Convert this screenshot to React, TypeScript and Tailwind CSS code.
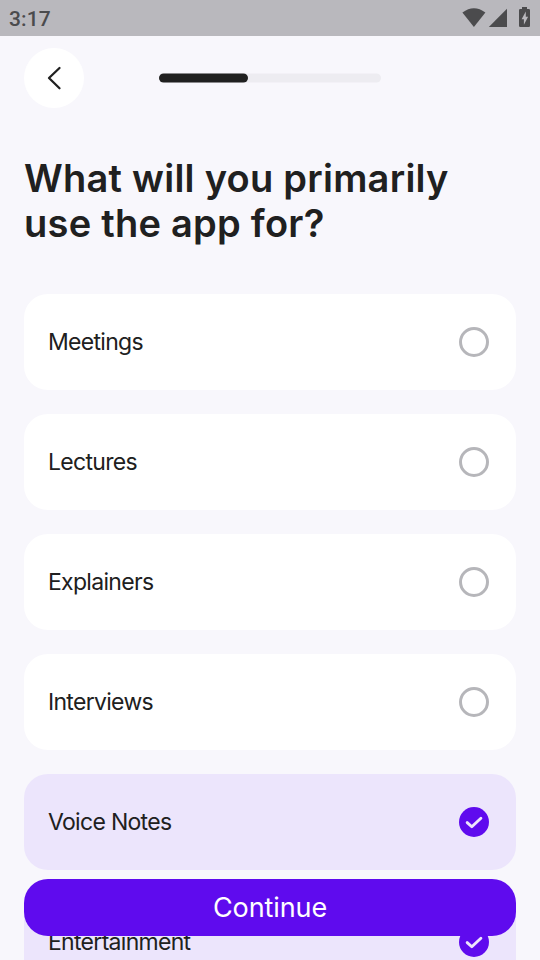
import React from "react";

type Option = { label: string; selected: boolean };

const OPTIONS: Option[] = [
  { label: "Meetings", selected: false },
  { label: "Lectures", selected: false },
  { label: "Explainers", selected: false },
  { label: "Interviews", selected: false },
  { label: "Voice Notes", selected: true },
  { label: "Entertainment", selected: true },
];

function StatusBar() {
  return (
    <div className="flex h-9 shrink-0 items-center justify-between bg-[#b9b8bd] pl-[9px] text-[#4b4b4d]">
      <span className="pt-[2px] font-[Roboto,sans-serif] text-[21px] leading-6 font-medium tracking-[0.1px]">3:17</span>
      <svg width="80" height="36" viewBox="460 0 80 36" fill="currentColor" aria-hidden="true">
        <path d="M462.4 12.6Q474 3.8 485.4 12.6L473.9 27Z" />
        <path d="M507 8.7V27H488.8Z" />
        <path
          fillRule="evenodd"
          d="M522 7h5v2h1.8q1.2 0 1.2 1.2v15.6q0 1.2-1.2 1.2h-8.6q-1.2 0-1.2-1.2V10.2q0-1.2 1.2-1.2h1.8ZM525.8 11.4l-4.2 7.8h2.3v5.6l4.2-8h-2.3Z"
        />
      </svg>
    </div>
  );
}

function Header() {
  return (
    <header className="grid h-[60px] shrink-0 grid-cols-[60px_1fr_60px] items-center">
      <button className="flex size-[60px] items-center justify-center rounded-full bg-white" aria-label="Back">
        <svg width="60" height="60" viewBox="0 0 60 60" fill="none" stroke="#202020" strokeWidth="2.3" strokeLinecap="round" strokeLinejoin="round">
          <path d="M35.5 20L25 30L35.5 40.2" />
        </svg>
      </button>
      <svg className="mx-auto" width="222" height="10" viewBox="0 0 222 10" aria-hidden="true">
        <rect y="0.4" width="222" height="9.2" rx="4.6" fill="#edecf1" />
        <rect y="0.4" width="89" height="9.2" rx="4.6" fill="#202020" />
      </svg>
    </header>
  );
}

function Radio({ selected }: { selected: boolean }) {
  if (!selected) {
    return <span className="size-[30px] rounded-full border-3 border-[#b6b6ba]" />;
  }
  return (
    <span className="size-[30px] rounded-full bg-[#5f0bee]">
      <svg width="30" height="30" viewBox="0 0 30 30" fill="none" stroke="#ece5fc" strokeWidth="2.9" strokeLinecap="round" strokeLinejoin="round">
        <path d="M8.2 15.6L12.8 19.8L21.9 11.3" />
      </svg>
    </span>
  );
}

function OptionCard({ label, selected }: Option) {
  return (
    <li className={`flex h-24 shrink-0 items-center justify-between rounded-3xl pr-[27px] pl-6 ${selected ? "bg-[#ece5fc]" : "bg-white"}`}>
      <span className="text-[23px] leading-8 tracking-[-0.7px]">{label}</span>
      <Radio selected={selected} />
    </li>
  );
}

export default function App() {
  return (
    <div className="relative flex h-[960px] w-[540px] flex-col overflow-hidden bg-[#f8f7fc] font-[Inter,sans-serif] text-[#202020]">
      <StatusBar />
      <main className="flex flex-col px-6 pt-3">
        <Header />
        <h1 className="mt-12 text-[38px] leading-[45px] font-semibold tracking-[0.25px]">
          What will you primarily
          <br />
          use the app for?
        </h1>
        <ul className="mt-12 flex flex-col gap-6">
          {OPTIONS.map((option) => (
            <OptionCard key={option.label} {...option} />
          ))}
        </ul>
      </main>
      <button className="absolute top-[879px] right-6 left-6 flex h-[56.5px] items-center justify-center rounded-3xl bg-[#5f0bee] pt-px text-[27px] leading-8 tracking-[-0.1px] text-white">
        Continue
      </button>
    </div>
  );
}
